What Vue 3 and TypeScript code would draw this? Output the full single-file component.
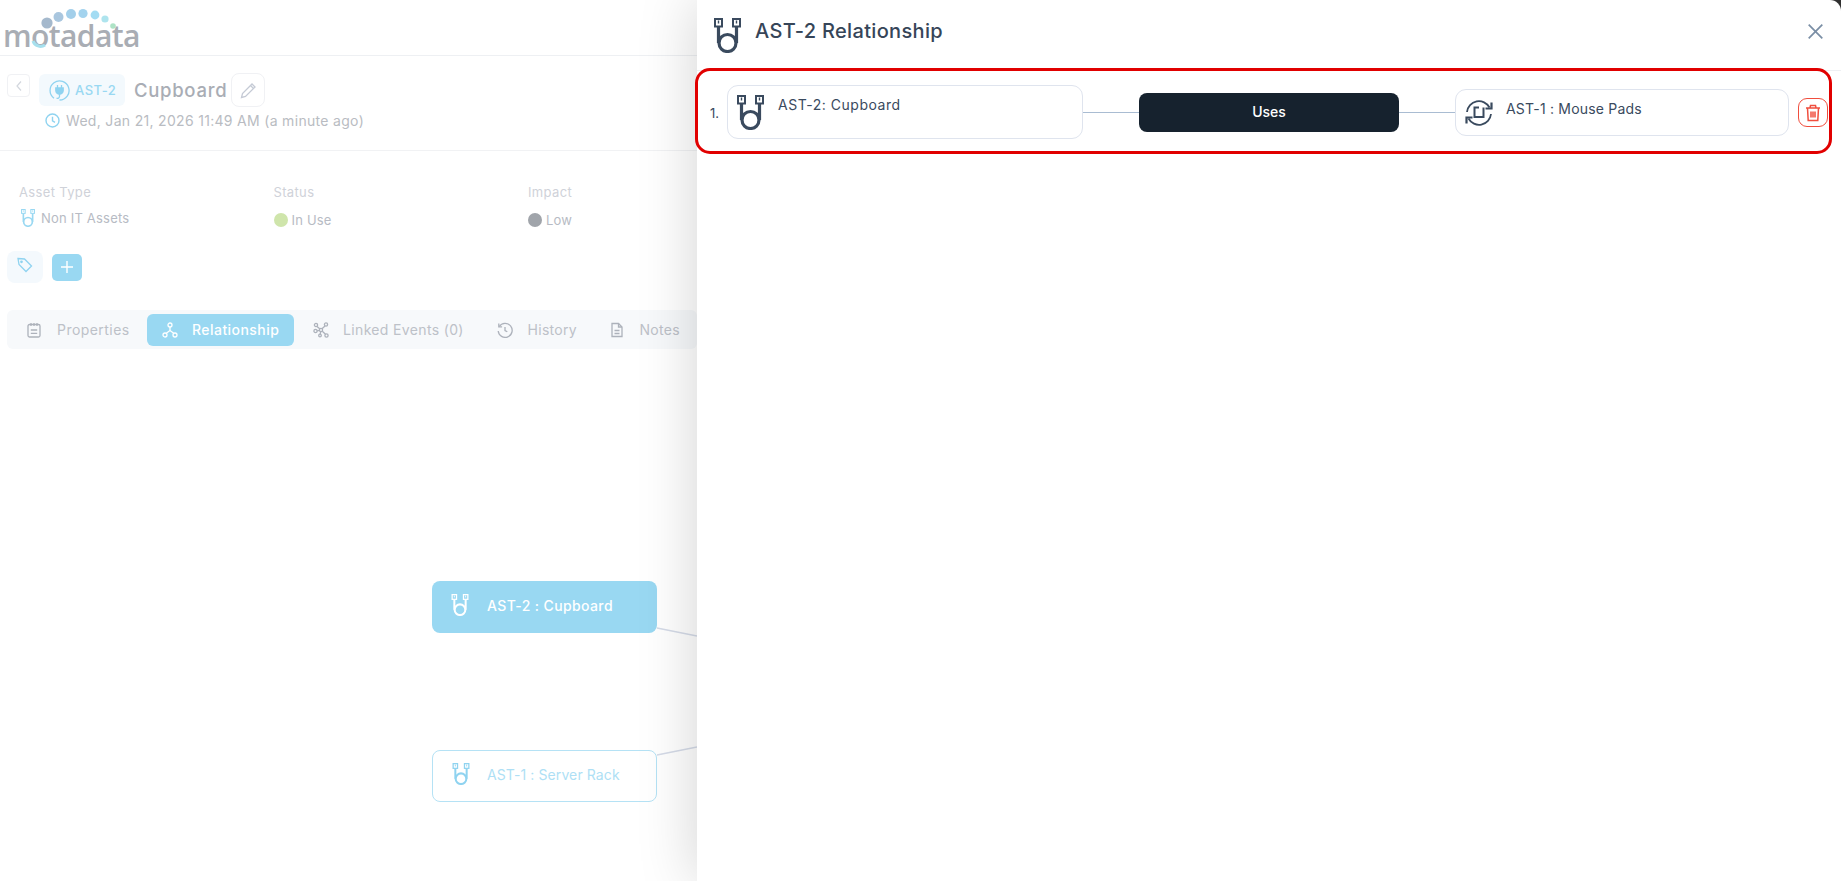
<script setup lang="ts">
interface Tab { label: string; icon: string; active?: boolean }
const tabs: Tab[] = [
  { label: 'Properties', icon: 'props' },
  { label: 'Relationship', icon: 'rel', active: true },
  { label: 'Linked Events (0)', icon: 'linked' },
  { label: 'History', icon: 'history' },
  { label: 'Notes', icon: 'notes' },
]
</script>

<template>
  <div class="page">
    <svg class="defs" width="0" height="0" aria-hidden="true">
      <defs>
        <symbol id="cable" viewBox="0 0 27 35">
          <g fill="none" stroke="currentColor">
            <rect x="1" y="1" width="7" height="7.500" stroke-width="2" />
            <rect x="19" y="1" width="7" height="7.500" stroke-width="2" />
            <path d="M4.500 2.500V5.500M22.500 2.500V5.500" stroke-width="1.400" />
            <path d="M4.500 9V25M22.500 9V25" stroke-width="3.200" />
            <circle cx="13.500" cy="25" r="8.500" stroke-width="3.200" />
          </g>
        </symbol>
      </defs>
    </svg>

    <div class="under">
      <header class="top">
        <div class="logo">
          <span class="logo-text">motadata</span>
          <svg class="logo-dots" width="140" height="56" viewBox="0 0 140 56">
            <circle cx="47" cy="23" r="5.600" fill="#a5b9cd" />
            <circle cx="58.500" cy="17" r="5" fill="#a9c6de" />
            <circle cx="71" cy="14" r="5" fill="#a3cfea" />
            <circle cx="83" cy="13.500" r="4.600" fill="#a3d3ee" />
            <circle cx="95" cy="15" r="4.400" fill="#a3dcf3" />
            <circle cx="105" cy="19" r="3.600" fill="#aee4ee" />
            <circle cx="113" cy="26" r="2.800" fill="#aee3c6" />
            <path d="M33 41a8 8 0 0 0 12 4" fill="none" stroke="#a6e0ee" stroke-width="3" />
          </svg>
        </div>
      </header>

      <section class="summary">
        <div class="title-row">
          <button class="back">
            <svg width="10" height="12" viewBox="0 0 10 12"><path d="M7 1.500 3 6l4 4.500" fill="none" stroke="#d3d7de" stroke-width="1.200" /></svg>
          </button>
          <div class="badge">
            <svg width="21" height="21" viewBox="0 0 21 21" fill="none" stroke="#8fd3f0" stroke-width="1.300">
              <path d="M5 18.200A9.500 9.500 0 1 1 10.500 20" />
              <path d="M8.500 5v3M12.500 5v3" />
              <path d="M6.800 8h7.400v2.500a3.700 3.700 0 0 1-7.400 0z" fill="#8fd3f0" />
              <path d="M10.500 14v2.500a2 2 0 0 1-3 1.500" />
            </svg>
            <span>AST-2</span>
          </div>
          <h1 class="name">Cupboard</h1>
          <button class="edit">
            <svg width="17" height="17" viewBox="0 0 17 17" fill="none" stroke="#c5cad5" stroke-width="1.300">
              <path d="M1.500 15.500l1-4L12 2l3 3-9.500 9.500z" />
              <path d="M10.500 3.500l3 3" />
            </svg>
          </button>
        </div>
        <div class="date-row">
          <svg width="15" height="15" viewBox="0 0 15 15" fill="none" stroke="#8fd3f0" stroke-width="1.400">
            <circle cx="7.500" cy="7.500" r="6.500" />
            <path d="M7.500 3.800v4l2.500 1.500" />
          </svg>
          <span>Wed, Jan 21, 2026 11:49 AM (a minute ago)</span>
        </div>
      </section>

      <section class="meta">
        <div>
          <div class="meta-label">Asset Type</div>
          <div class="meta-value type-value">
            <svg class="type-icon" width="14" height="18"><use href="#cable" /></svg>
            <span>Non IT Assets</span>
          </div>
        </div>
        <div>
          <div class="meta-label">Status</div>
          <div class="meta-value status-value"><i class="dot green"></i><span>In Use</span></div>
        </div>
        <div>
          <div class="meta-label">Impact</div>
          <div class="meta-value status-value"><i class="dot gray"></i><span>Low</span></div>
        </div>
      </section>

      <div class="tags">
        <button class="tag-btn">
          <svg width="16" height="16" viewBox="0 0 16 16" fill="none" stroke="#8fd3f0" stroke-width="1.300">
            <path d="M1 1.500l6.500.5 7 7-5.500 5.500-7-7z" />
            <circle cx="4.500" cy="4.800" r=".7" fill="#8fd3f0" />
          </svg>
        </button>
        <button class="plus-btn">
          <svg width="14" height="14" viewBox="0 0 14 14"><path d="M7 1v12M1 7h12" stroke="#fff" stroke-width="1.400" /></svg>
        </button>
      </div>

      <nav class="tabs">
        <div v-for="t in tabs" :key="t.label" class="tab" :class="{ active: t.active }">
          <svg class="tab-icon" width="16" height="16" viewBox="0 0 16 16" fill="none" stroke="currentColor" stroke-width="1.300">
            <template v-if="t.icon === 'props'">
              <rect x="2" y="2.500" width="12" height="12.500" rx="1.500" />
              <path d="M5 1v3M8 1v3M11 1v3M4.800 8h6.400M4.800 11.300h6.400" />
            </template>
            <template v-else-if="t.icon === 'rel'">
              <circle cx="8" cy="3" r="2" />
              <circle cx="3" cy="13" r="2" />
              <circle cx="13" cy="13" r="2" />
              <path d="M8 5v3.500L4 11.500M8 8.500l4 3" />
            </template>
            <template v-else-if="t.icon === 'linked'">
              <circle cx="3" cy="3" r="1.600" />
              <circle cx="13" cy="2.500" r="1.600" />
              <circle cx="2.500" cy="9" r="1.600" />
              <circle cx="13.500" cy="13.500" r="1.600" />
              <circle cx="7" cy="13.500" r="1.300" />
              <circle cx="8" cy="8" r="1.600" />
              <path d="M4 4.500l3 2.500M12 4l-3 2.700M4 8.800l2.500-.5M9.300 9.300l3.200 3M7.700 9.700l-.5 2.500" />
            </template>
            <template v-else-if="t.icon === 'history'">
              <path d="M2.300 4.500A7 7 0 1 1 1.200 9" />
              <path d="M1.800 1.500v3.300h3.300M8 5v3.500l2.300 1.300" />
            </template>
            <template v-else>
              <path d="M3 1.500h6.500L13 5v9.500H3z" />
              <path d="M9.500 1.500V5H13M5.500 8.500h5M5.500 11.500h5" />
            </template>
          </svg>
          <span>{{ t.label }}</span>
        </div>
      </nav>

      <div class="graph">
        <svg class="edges" width="697" height="531">
          <path d="M657 279 697 287M657 406 697 398" stroke="#d5dbe8" stroke-width="1.500" />
        </svg>
        <div class="node node-a">
          <svg width="18" height="22"><use href="#cable" /></svg>
          <span>AST-2 : Cupboard</span>
        </div>
        <div class="node node-b">
          <svg width="18" height="22"><use href="#cable" /></svg>
          <span>AST-1 : Server Rack</span>
        </div>
      </div>
    </div>

    <i class="corner"></i>

    <aside class="drawer">
      <header class="drawer-head">
        <svg class="cable-lg" width="27" height="35"><use href="#cable" /></svg>
        <h2>AST-2 Relationship</h2>
        <svg class="close" width="15" height="15" viewBox="0 0 15 15"><path d="M.7.7l13.600 13.600M14.300.7.7 14.300" stroke="#7a8ea5" stroke-width="1.700" fill="none" /></svg>
      </header>
      <div class="rel-row">
        <span class="num">1.</span>
        <div class="card card-left">
          <svg class="cable-lg" width="27" height="35"><use href="#cable" /></svg>
          <span class="card-text">AST-2: Cupboard</span>
        </div>
        <i class="link"></i>
        <div class="uses">Uses</div>
        <i class="link"></i>
        <div class="card card-right">
          <svg class="swap-icon" width="28" height="28" viewBox="0 0 28 28" fill="none" stroke="#3a4a5e" stroke-width="1.800">
            <path d="M2 13A12 12 0 0 1 24.500 8.500" />
            <path d="M26.500 3.500V9.500H20.500" stroke-width="2.200" />
            <path d="M26 15A12 12 0 0 1 3.500 19.500" />
            <path d="M1.500 24.500V18.500H7.500" stroke-width="2.200" />
            <path d="M14 8.500H9.500V18h9v-9.500" stroke-width="2" />
          </svg>
          <span class="card-text">AST-1 : Mouse Pads</span>
        </div>
        <button class="trash">
          <svg width="16" height="18" viewBox="0 0 16 18" fill="none" stroke="#f04e3e" stroke-width="1.500">
            <path d="M1 4h14M5 4l.5-2.500h5L11 4M2.500 4l.7 12.500h9.600L13.500 4M6 7.500v6M8 7.500v6M10 7.500v6" />
          </svg>
        </button>
      </div>
      <div class="annotation"></div>
    </aside>
  </div>
</template>

<style>
html, body { margin: 0; background: #fff; }
</style>

<style scoped>
.page {
  position: relative;
  width: 1841px;
  height: 881px;
  overflow: hidden;
  background: #fff;
  font-family: Inter, "Liberation Sans", sans-serif;
}
.defs { position: absolute; }
button { padding: 0; font: inherit; background: none; cursor: pointer; }

.under { display: flex; flex-direction: column; height: 100%; }
.top { height: 55px; flex: none; box-sizing: content-box; border-top: 1px solid #eef3f7; border-bottom: 1px solid #eef0f3; margin-top: -1px; }
.logo { position: relative; width: 145px; height: 55px; }
.logo-text {
  display: block;
  padding: 19px 0 0 3px;
  font-family: "Open Sans", sans-serif;
  font-size: 30px;
  line-height: 34px;
  font-weight: 600;
  letter-spacing: -0.6px;
  color: #a9adb4;
}
.logo-dots { position: absolute; left: 0; top: 0; }

.summary { flex: none; height: 95px; box-sizing: border-box; padding: 17px 0 0 7px; border-bottom: 1px solid #f1f2f4; }
.title-row { display: flex; align-items: flex-start; height: 34px; }
.back { width: 23px; height: 23px; margin: 1px 9px 0 0; border: 1px solid #f0f1f4; border-radius: 4px; display: flex; align-items: center; justify-content: center; }
.badge { width: 86px; height: 32px; margin: 1px 9px 0 0; box-sizing: border-box; padding-left: 10px; background: #f3f9fd; border-radius: 6px; display: flex; align-items: center; gap: 5px; color: #99d8f2; font-size: 13px; font-weight: 500; letter-spacing: .5px; }
.name { margin: 0 5px 0 0; width: 92px; font-size: 18.500px; line-height: 34px; font-weight: 500; letter-spacing: .7px; color: #a9adb5; white-space: nowrap; }
.edit { width: 34px; height: 34px; border: 1px solid #f0f1f4; border-radius: 8px; display: flex; align-items: center; justify-content: center; }
.date-row { display: flex; align-items: center; gap: 6px; margin: 3px 0 0 38px; height: 20px; font-size: 14px; letter-spacing: .31px; color: #b9bcc2; white-space: nowrap; }

.meta { flex: none; display: grid; grid-template-columns: repeat(3, 254.500px); padding: 31px 0 0 19px; }
.meta-label { height: 20px; line-height: 20px; font-size: 13px; letter-spacing: .35px; color: #cfd2d9; }
.meta-value { display: flex; align-items: center; gap: 5px; height: 20px; margin-top: 6px; font-size: 13px; letter-spacing: .2px; color: #b7bbc4; }
.status-value { gap: 4px; padding-top: 2px; }
.type-value { gap: 6px; margin-left: 2px; }
.type-icon { color: #99d8f2; }
.dot { width: 14px; height: 14px; border-radius: 50%; }
.green { background: #cfe5ab; }
.gray { background: #a0a4aa; }

.tags { flex: none; display: flex; align-items: center; gap: 9px; margin: 21px 0 0 7px; }
.tag-btn { width: 36px; height: 32px; border: none; border-radius: 8px; background: #f4f9fd; display: flex; align-items: center; justify-content: center; padding-bottom: 4px; }
.plus-btn { width: 30px; height: 27px; border: none; border-radius: 5px; background: #99d8f2; display: flex; align-items: center; justify-content: center; }

.tabs { flex: none; display: grid; grid-template-columns: 140px 147px 187.500px 112px 103.500px; align-items: center; height: 39px; margin: 27px 0 0 7px; width: 690px; background: #f7f9fb; border-radius: 6px; }
.tab { display: flex; align-items: center; gap: 15px; height: 32px; padding-left: 15px; font-size: 14px; letter-spacing: .45px; color: #bdc1c8; white-space: nowrap; border-radius: 6px; }
.tab:first-child { padding-left: 19px; }
.tab:nth-child(2) { gap: 14px; }
.tab:nth-child(3) { padding-left: 19px; gap: 14px; letter-spacing: .35px; }
.tab:nth-child(4), .tab:nth-child(5) { letter-spacing: .3px; }
.tab .tab-icon { flex: none; color: #adb2bb; }
.tab.active { background: #99d8f2; color: #fff; font-weight: 500; }
.tab.active .tab-icon { color: #fff; }

.graph { position: relative; flex: 1; }
.edges { position: absolute; left: 0; top: 0; }
.node { position: absolute; left: 432px; width: 225px; height: 52px; box-sizing: border-box; padding-left: 19px; border-radius: 8px; display: flex; align-items: center; gap: 18px; font-size: 14px; letter-spacing: .38px; }
.node span { margin-top: -3px; }
.node svg { margin-top: -4px; }
.node-a { top: 232px; background: #99d8f2; color: #fff; font-weight: 500; }
.node-b { top: 401px; background: #fff; border: 1px solid #b5e2f5; color: #aedff5; gap: 17px; letter-spacing: .1px; }
.node-b svg { color: #8fd3f0; }

.corner { position: absolute; right: 0; top: 0; width: 14px; height: 14px; background: #333; }
.drawer {
  position: absolute;
  top: 0;
  bottom: 0;
  left: 697px;
  right: 0;
  background: #fff;
  border-top-right-radius: 11px;
  box-shadow: 0 0 60px rgba(0, 0, 0, .18);
  color: #3a4a5e;
}
.drawer-head { display: flex; align-items: center; height: 70px; padding: 0 18px 0 17px; border-bottom: 1px solid #eef0f3; }
.drawer-head .cable-lg { margin-top: 1px; flex: none; }
.drawer-head h2 { flex: 1; margin: -9px 0 0 14px; font-size: 20px; line-height: 28px; font-weight: 500; letter-spacing: .33px; color: #364558; }
.close { margin-top: -8px; }
.rel-row { display: flex; align-items: center; height: 83px; padding-left: 13px; }
.num { width: 17px; font-size: 13px; }
.card { box-sizing: border-box; background: #fff; border: 1px solid #dfe4ee; border-radius: 11px; display: flex; }
.card-left { width: 356px; height: 54px; margin-bottom: 1px; padding: 9px 0 0 9px; gap: 14px; }
.card-right { width: 334px; height: 47px; padding: 9px 0 0 9px; gap: 13px; }
.card-text { font-size: 14px; line-height: 20px; letter-spacing: .52px; white-space: nowrap; }
.card-left .card-text { margin-top: 0; }
.card-right .card-text { margin-top: 0; letter-spacing: .2px; }
.link { width: 56px; height: 1px; background: #a9bcd2; }
.uses { width: 260px; height: 39px; box-sizing: border-box; padding-bottom: 2px; background: #16222e; border-radius: 8px; color: #fff; font-size: 14px; font-weight: 500; display: flex; align-items: center; justify-content: center; }
.trash { width: 30px; height: 29px; margin-left: 9px; border: 1px solid #f04e3e; border-radius: 9px; display: flex; align-items: center; justify-content: center; }
.annotation { position: absolute; left: -2px; top: 68px; width: 1137px; height: 86px; box-sizing: border-box; border: 3px solid #e10000; border-radius: 15px; pointer-events: none; }
</style>
